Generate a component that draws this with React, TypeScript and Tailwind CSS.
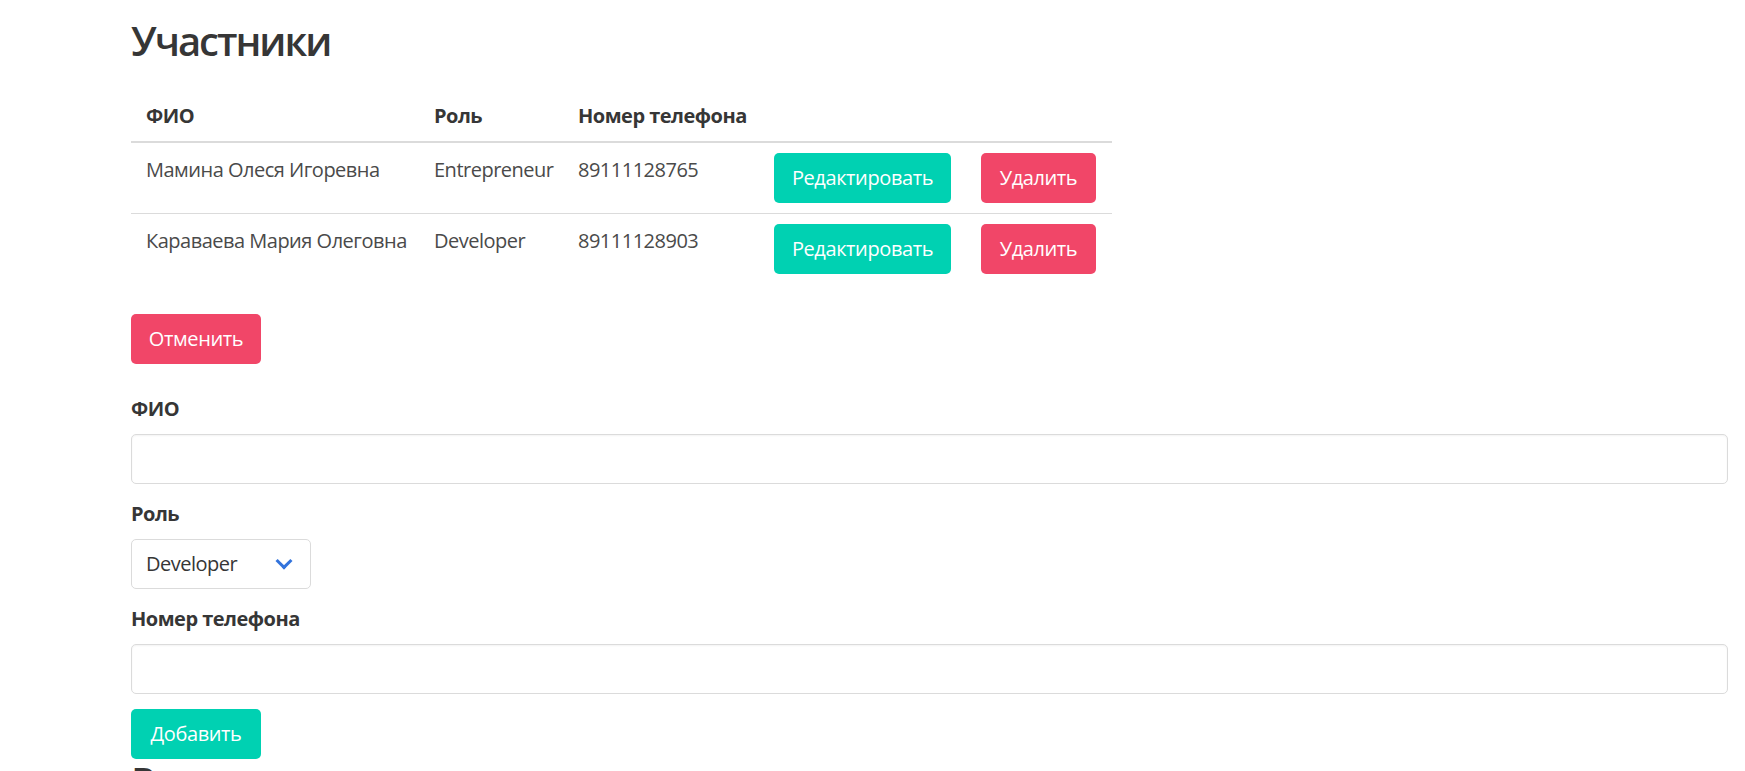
import { useState } from "react";

type Member = { name: string; role: string; phone: string };

const initialMembers: Member[] = [
  { name: "Мамина Олеся Игоревна", role: "Entrepreneur", phone: "89111128765" },
  { name: "Караваева Мария Олеговна", role: "Developer", phone: "89111128903" },
];

const font = "font-['Open_Sans','Noto_Sans',sans-serif]";
const btn =
  "h-[50px] rounded-[5px] border border-transparent text-white text-[20px] leading-[30px] tracking-[-0.4px] flex items-center justify-center";
const input =
  "w-full h-[50px] rounded-[5px] border border-[#dbdbdb] bg-white px-[14px] text-[20px] text-[#363636] shadow-[inset_0_1px_2px_rgba(10,10,10,0.05)] outline-none";

export default function App() {
  const [members] = useState(initialMembers);
  const [role, setRole] = useState("Developer");

  return (
    <div className={`${font} min-h-screen bg-white pl-[131px] pr-[17px] pt-[18px] text-[20px] leading-[30px] tracking-[-0.5px] text-[#4a4a4a]`}>
      <h1 className="mb-[28px] text-[40px] leading-[45px] font-semibold tracking-[-2px] text-[#363636]">Участники</h1>

      <table className="mb-[30px] w-[981px] table-fixed border-collapse">
        <colgroup>
          <col className="w-[288px]" />
          <col className="w-[144px]" />
          <col className="w-[196px]" />
          <col className="w-[207px]" />
          <col className="w-[146px]" />
        </colgroup>
        <thead>
          <tr className="border-b-2 border-[#dbdbdb]">
            <th className="px-[15px] py-[10px] text-left font-bold text-[#363636]">ФИО</th>
            <th className="px-[15px] py-[10px] text-left font-bold text-[#363636]">Роль</th>
            <th className="px-[15px] py-[10px] text-left font-bold text-[#363636] whitespace-nowrap">Номер телефона</th>
            <th />
            <th />
          </tr>
        </thead>
        <tbody>
          {members.map((m, i) => (
            <tr key={m.phone} className={i < members.length - 1 ? "border-b border-[#dbdbdb]" : ""}>
              <td className="px-[15px] pt-[12px] align-top whitespace-nowrap">{m.name}</td>
              <td className="px-[15px] pt-[12px] align-top">{m.role}</td>
              <td className="px-[15px] pt-[12px] align-top">{m.phone}</td>
              <td className="px-[15px] py-[10px] align-top">
                <button className={`${btn} w-[177px] bg-[#00d1b2]`}>Редактировать</button>
              </td>
              <td className="px-[15px] py-[10px] align-top">
                <button className={`${btn} w-[115px] bg-[#f14668]`}>Удалить</button>
              </td>
            </tr>
          ))}
        </tbody>
      </table>

      <button className={`${btn} mb-[30px] w-[130px] bg-[#f14668]`}>Отменить</button>

      <div className="mb-[15px]">
        <label className="mb-[10px] block font-bold text-[#363636]">ФИО</label>
        <input className={input} />
      </div>

      <div className="mb-[15px]">
        <label className="mb-[10px] block font-bold text-[#363636]">Роль</label>
        <div className="relative w-[180px]">
          <select
            value={role}
            onChange={(e) => setRole(e.target.value)}
            className="h-[50px] w-full appearance-none rounded-[5px] border border-[#dbdbdb] bg-white pl-[14px] pr-[50px] text-[20px] tracking-[-0.5px] text-[#363636] outline-none"
          >
            <option>Entrepreneur</option>
            <option>Developer</option>
          </select>
          <span className="pointer-events-none absolute right-[21px] top-[16px] h-[12px] w-[12px] -rotate-45 border-b-[3px] border-l-[3px] border-[#3273dc]" />
        </div>
      </div>

      <div className="mb-[15px]">
        <label className="mb-[10px] block font-bold text-[#363636]">Номер телефона</label>
        <input className={input} />
      </div>

      <button className={`${btn} w-[130px] bg-[#00d1b2]`}>Добавить</button>

      <h2 className="text-[40px] leading-[45px] font-semibold tracking-[-2px] text-[#363636]">Роли</h2>
    </div>
  );
}
